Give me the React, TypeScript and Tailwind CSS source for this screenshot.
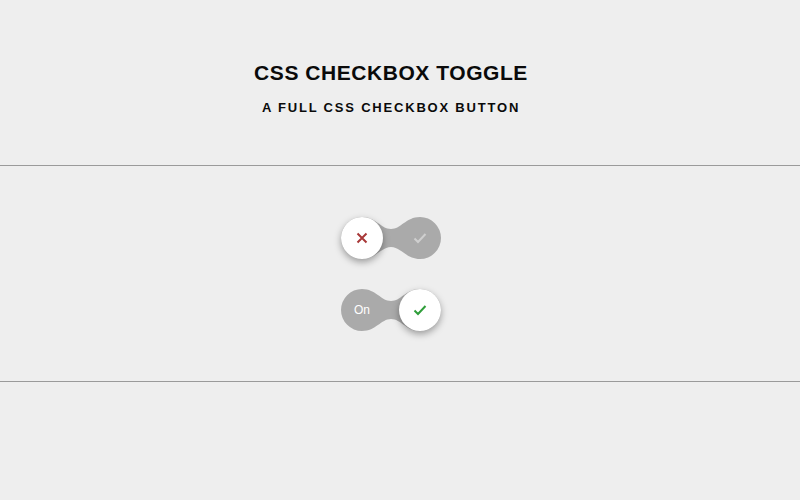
import React from "react";

function Track() {
  return (
    <svg width="100" height="42" viewBox="0 0 100 42" className="absolute left-0 top-0">
      <path
        d="M21,0 A21,21 0 0 0 21,42 C35,42 40,30 50,30 C60,30 65,42 79,42 A21,21 0 0 0 79,0 C65,0 60,12 50,12 C40,12 35,0 21,0 Z"
        fill="#aaaaaa"
      />
    </svg>
  );
}

function Knob({ children }: { children: React.ReactNode }) {
  return (
    <div className="relative z-10 flex h-[42px] w-[42px] items-center justify-center rounded-full bg-white shadow-[0_3px_7px_rgba(0,0,0,0.35)]">
      {children}
    </div>
  );
}

function XIcon() {
  return (
    <svg width="12" height="12" viewBox="0 0 12 12">
      <path d="M1.5 1.5 L10.5 10.5 M10.5 1.5 L1.5 10.5" stroke="#a83838" strokeWidth="2" strokeLinecap="butt" fill="none" />
    </svg>
  );
}

function Check({ color }: { color: string }) {
  return (
    <svg width="14" height="12" viewBox="0 0 14 12">
      <path d="M1.5 6.5 L5 10 L12.5 2" stroke={color} strokeWidth="2" fill="none" />
    </svg>
  );
}

export default function App() {
  return (
    <div className="min-h-[500px] w-full bg-[#eeeeee]" style={{ fontFamily: '"Liberation Sans", Arial, sans-serif' }}>
      <header className="flex h-[166px] flex-col items-center border-b border-[#9a9a9a] pr-[18px] pt-[60px]">
        <h1 className="text-[21px] font-bold leading-[26px] tracking-[0.55px] text-[#0a0a0a]">CSS CHECKBOX TOGGLE</h1>
        <h2 className="mt-[14px] text-[13px] font-bold leading-[16px] tracking-[1.8px] text-[#0a0a0a]">A FULL CSS CHECKBOX BUTTON</h2>
      </header>
      <section className="flex h-[216px] flex-col items-center justify-center gap-[30px] border-b border-[#9a9a9a] pr-[18px]">
        <div className="relative flex h-[42px] w-[100px] items-center">
          <Track />
          <Knob>
            <XIcon />
          </Knob>
          <div className="relative ml-auto flex h-[42px] w-[42px] items-center justify-center">
            <Check color="#cfcfcf" />
          </div>
        </div>
        <div className="relative flex h-[42px] w-[100px] items-center">
          <Track />
          <div className="relative flex h-[42px] w-[42px] items-center justify-center text-[12px] text-white">On</div>
          <div className="ml-auto">
            <Knob>
              <Check color="#2f9e3a" />
            </Knob>
          </div>
        </div>
      </section>
    </div>
  );
}
